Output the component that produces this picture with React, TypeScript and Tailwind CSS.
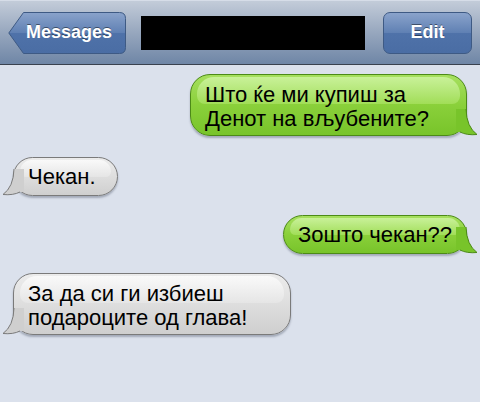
import React from "react";

const font = { fontFamily: '"Liberation Sans", Arial, sans-serif' };

function Tail({ side, color, stroke }: { side: "left" | "right"; color: string; stroke: string }) {
  const flip = side === "left";
  return (
    <svg
      width="22"
      height="28"
      viewBox="0 0 22 28"
      className={`absolute bottom-[-1px] ${flip ? "left-[-12px] scale-x-[-1]" : "right-[-12px]"}`}
    >
      <path d="M0 1 L10 1 Q10.5 19 21 26.5 Q11 27.5 4 24 L0 24 Z" fill={color} />
      <path d="M10 1 Q10.5 19 21 26.5 Q11 27.5 4 24" fill="none" stroke={stroke} strokeWidth="1" />
    </svg>
  );
}

function Bubble({
  side,
  width,
  lines,
}: {
  side: "left" | "right";
  width: string;
  lines: string[];
}) {
  const green = side === "right";
  const two = lines.length > 1;
  return (
    <div className={`flex ${green ? "justify-end pr-[13px]" : "justify-start pl-[13px]"}`}>
      <div
        className={`relative ${width} rounded-[20px] border ${
          green
            ? "border-[#4c8a17] bg-gradient-to-b from-[#a6e05e] via-[#8ad03a] to-[#78c42a]"
            : "border-[#7a7a7a] bg-gradient-to-b from-[#ececec] via-[#dedede] to-[#cfcfcf]"
        } ${two ? "pt-[8px] pb-[4px]" : "pt-[7px] pb-[6px]"} pl-[14px] pr-[10px] shadow-[0_2px_2px_rgba(60,70,90,0.35)]`}
      >
        <div
          className={`absolute left-[6px] right-[6px] top-[2px] h-[45%] rounded-t-[17px] rounded-b-[8px] bg-gradient-to-b ${
            green ? "from-[#cdf39f] to-[#a4df5a]" : "from-[#fbfbfb] to-[#e6e6e6]"
          } opacity-90`}
        />
        <Tail
          side={side}
          color={green ? "#78c42a" : "#cfcfcf"}
          stroke={green ? "#4c8a17" : "#7a7a7a"}
        />
        <div className="relative text-[22px] leading-[24px] text-black" style={font}>
          {lines.map((l) => (
            <div key={l} className="whitespace-nowrap">
              {l}
            </div>
          ))}
        </div>
      </div>
    </div>
  );
}

export default function App() {
  return (
    <div className="w-[480px] h-[402px] overflow-hidden bg-[#dbe1ec]" style={font}>
      <div className="h-[65px] border-t border-t-[#d6dde8] border-b border-b-[#39414e] bg-gradient-to-b from-[#c3ccd9] via-[#97a7be] to-[#6f86a6] flex items-center px-[8px]">
        <div className="relative w-[118px] h-[42px] flex items-center justify-end pr-[14px]">
          <svg width="118" height="42" viewBox="0 0 118 42" className="absolute inset-0">
            <defs>
              <linearGradient id="bb" x1="0" y1="0" x2="0" y2="1">
                <stop offset="0" stopColor="#8aa3cb" />
                <stop offset="0.5" stopColor="#5f80b3" />
                <stop offset="0.5" stopColor="#4f72a9" />
                <stop offset="1" stopColor="#4a6da4" />
              </linearGradient>
            </defs>
            <path
              d="M15.5 0.5 H111.5 Q117.5 0.5 117.5 6.5 V35.5 Q117.5 41.5 111.5 41.5 H15.5 L0.8 21 Z"
              fill="url(#bb)"
              stroke="#3e5a84"
              strokeWidth="1"
            />
          </svg>
          <span className="relative text-white font-bold text-[18px] [text-shadow:0_-1px_0_rgba(0,0,0,0.45)]">
            Messages
          </span>
        </div>
        <div className="ml-[15px] w-[224px] h-[34px] bg-black" />
        <div className="ml-[18px] w-[89px] h-[42px] rounded-[7px] border border-[#3e5a84] bg-[linear-gradient(to_bottom,#8aa3cb,#5f80b3_50%,#4f72a9_50%,#4a6da4)] flex items-center justify-center">
          <span className="text-white font-bold text-[18px] [text-shadow:0_-1px_0_rgba(0,0,0,0.45)]">
            Edit
          </span>
        </div>
      </div>
      <div className="flex flex-col pt-[9px]">
        <Bubble side="right" width="w-[277px]" lines={["Што ќе ми купиш за", "Денот на вљубените?"]} />
        <div className="mt-[21px]">
          <Bubble side="left" width="w-[105px]" lines={["Чекан."]} />
        </div>
        <div className="mt-[19px]">
          <Bubble side="right" width="w-[184px]" lines={["Зошто чекан??"]} />
        </div>
        <div className="mt-[19px]">
          <Bubble side="left" width="w-[278px]" lines={["За да си ги избиеш", "подароците од глава!"]} />
        </div>
      </div>
    </div>
  );
}
